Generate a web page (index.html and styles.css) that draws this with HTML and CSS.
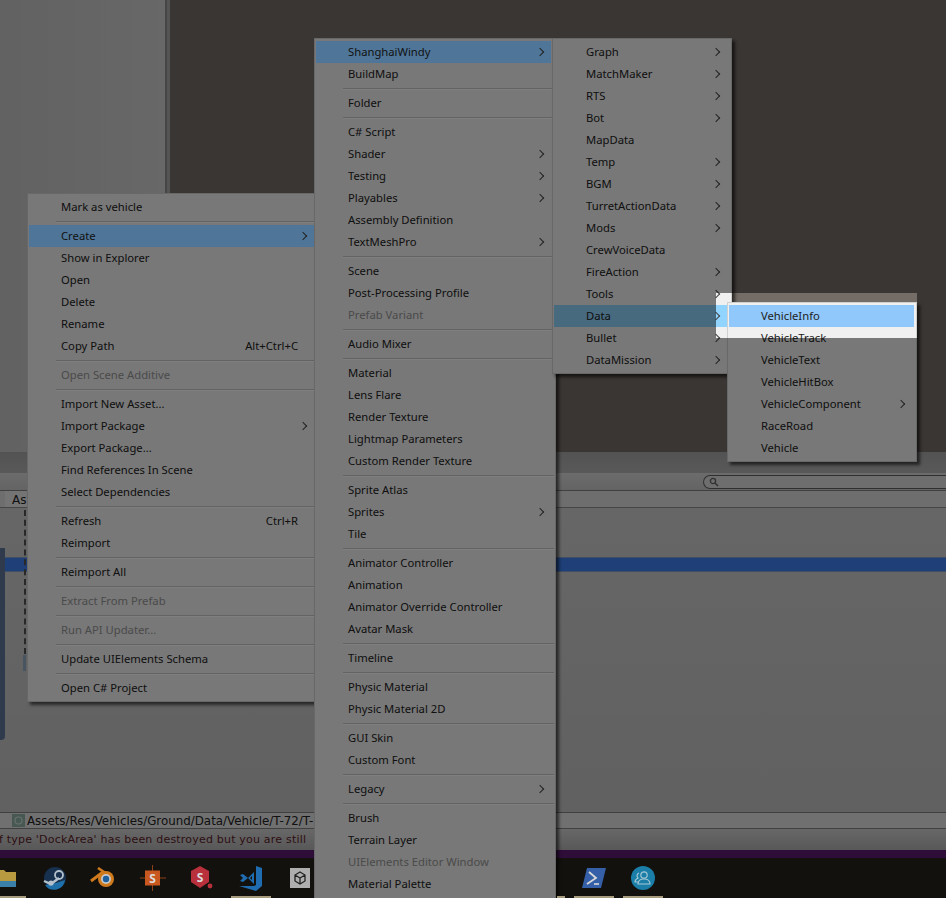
FILE: index.html
```html
<!DOCTYPE html>
<html>
<head>
	<meta charset="UTF-8">
	<title>Create menu</title>
	<link rel="stylesheet" href="styles.css">
</head>
<body>
<div class="screen">

	<div class="top">
		<div class="inspector"></div>
		<div class="split"></div>
		<div class="scene"></div>
	</div>
	<div class="band"></div>
	<div class="toolbar">
		<div class="search">
			<svg class="glass" width="10" height="10" viewBox="0 0 10 10"><circle cx="4" cy="4" r="2.6" fill="none" stroke="#666" stroke-width="1.4"/><path d="M6 6l3 3" stroke="#666" stroke-width="1.6"/></svg>
		</div>
	</div>
	<div class="tabs"><span class="tab">As</span></div>
	<div class="list">
		<div class="tree-strip"></div>
		<div class="dashes"></div>
		<div class="blob"></div>
		<div class="selected"></div>
	</div>
	<div class="pathbar">
		<svg class="asset-icon" width="13" height="13" viewBox="0 0 13 13"><rect width="13" height="13" fill="#8fb0a4"/><circle cx="6.5" cy="6.5" r="3.5" fill="none" stroke="#cfe0da" stroke-width="1.2"/></svg>
		<span>Assets/Res/Vehicles/Ground/Data/Vehicle/T-72/T-</span>
	</div>
	<div class="console"><span>f type 'DockArea' has been destroyed but you are still</span></div>
	<div class="purple"></div>

	<div class="taskbar">
		<div class="slot on">
			<svg width="20" height="18" viewBox="0 0 20 18"><path d="M0 1h8l2 2h10v15H0z" fill="#b89a40"/><path d="M0 12h20v6H0z" fill="#3a80a8"/></svg>
		</div>
		<div class="slot">
			<svg width="24" height="24" viewBox="0 0 24 24"><circle cx="12" cy="12" r="11" fill="#16304e"/><path d="M2 19a11 11 0 0 0 20-5l-9 3z" fill="#1f6fa8"/><path d="M1 15l7 3 8-6" stroke="#b4c0cc" stroke-width="2.4" fill="none"/><circle cx="16" cy="9" r="4" fill="none" stroke="#b4c0cc" stroke-width="1.8"/><circle cx="8" cy="17" r="2.6" fill="#b4c0cc"/></svg>
		</div>
		<div class="slot">
			<svg width="27" height="22" viewBox="0 0 27 22"><path d="M1 14L13 5" stroke="#d07a1e" stroke-width="3"/><path d="M8 1l9 6" stroke="#d07a1e" stroke-width="2.6"/><circle cx="16" cy="12" r="8" fill="#d07a1e"/><circle cx="16" cy="12" r="5" fill="#c8c8c8"/><circle cx="16" cy="12" r="3.2" fill="#1e5f9e"/></svg>
		</div>
		<div class="slot">
			<svg width="28" height="26" viewBox="0 0 28 26"><path d="M13.500 0v26M1 13h26" stroke="#8c4018" stroke-width="1"/><rect x="6" y="5.500" width="15" height="15" fill="#c8581f"/><text class="icon-s" x="13.500" y="17.500">S</text></svg>
		</div>
		<div class="slot">
			<svg width="24" height="26" viewBox="0 0 24 26"><path d="M10 1l9 5v11l-9 6-9-6V6z" fill="#b8303c"/><circle cx="20" cy="21" r="2.400" fill="#b8303c"/><text class="icon-s" x="10" y="17">S</text></svg>
		</div>
		<div class="slot on">
			<svg width="24" height="26" viewBox="0 0 24 26"><path d="M17 1l6 2v18l-6 5L0 21h15l2-1z" fill="#1f6cb0"/><path d="M1 10l3-1 5 4 6-6v12l-6-6-5 4-3-1 3-3zM11 13l2 2v-4z" fill="#1f6cb0" fill-rule="evenodd"/></svg>
		</div>
		<div class="slot">
			<div class="unity">
				<svg width="14" height="14" viewBox="0 0 14 14"><path d="M7 1l5 3v6l-5 3-5-3V4z M7 7l5-3 M7 7v6 M7 7L2 4" fill="none" stroke="#222" stroke-width="1.3"/></svg>
			</div>
		</div>
		<div class="slot"></div>
		<div class="slot"></div>
		<div class="slot"></div>
		<div class="slot"></div>
		<div class="slot on peek"></div>
		<div class="slot on">
			<svg width="24" height="20" viewBox="0 0 24 20"><path d="M5 0h19l-5 20H0z" fill="#3560a8"/><path d="M7 4l7 6-9 6" fill="none" stroke="#d8d8d8" stroke-width="1.8"/><path d="M12 16h5" stroke="#d8d8d8" stroke-width="1.6"/></svg>
		</div>
		<div class="slot on">
			<svg width="24" height="24" viewBox="0 0 24 24"><circle cx="12" cy="12" r="12" fill="#1a7ea8"/><circle cx="13" cy="9" r="3.2" fill="none" stroke="#a4c8d4" stroke-width="1.2"/><path d="M7 18c0-4 3-5 6-5s6 1 6 5zM8 7a3 3 0 0 0-1 5c-2 1-3 2-3 4h3" fill="none" stroke="#a4c8d4" stroke-width="1.2"/></svg>
		</div>
	</div>

	<!-- context menu -->
	<div class="menu menu-project">
		<div class="row">Mark as vehicle</div>
		<div class="sep"></div>
		<div class="row lit sub">Create</div>
		<div class="row">Show in Explorer</div>
		<div class="row">Open</div>
		<div class="row">Delete</div>
		<div class="row">Rename</div>
		<div class="row">Copy Path<span class="key">Alt+Ctrl+C</span></div>
		<div class="sep"></div>
		<div class="row off">Open Scene Additive</div>
		<div class="sep"></div>
		<div class="row">Import New Asset...</div>
		<div class="row sub">Import Package</div>
		<div class="row">Export Package...</div>
		<div class="row">Find References In Scene</div>
		<div class="row">Select Dependencies</div>
		<div class="sep"></div>
		<div class="row">Refresh<span class="key">Ctrl+R</span></div>
		<div class="row">Reimport</div>
		<div class="sep"></div>
		<div class="row">Reimport All</div>
		<div class="sep"></div>
		<div class="row off">Extract From Prefab</div>
		<div class="sep"></div>
		<div class="row off">Run API Updater...</div>
		<div class="sep"></div>
		<div class="row">Update UIElements Schema</div>
		<div class="sep"></div>
		<div class="row">Open C# Project</div>
	</div>

	<!-- create -->
	<div class="menu menu-create">
		<div class="row lit sub">ShanghaiWindy</div>
		<div class="row">BuildMap</div>
		<div class="sep"></div>
		<div class="row">Folder</div>
		<div class="sep"></div>
		<div class="row">C# Script</div>
		<div class="row sub">Shader</div>
		<div class="row sub">Testing</div>
		<div class="row sub">Playables</div>
		<div class="row">Assembly Definition</div>
		<div class="row sub">TextMeshPro</div>
		<div class="sep"></div>
		<div class="row">Scene</div>
		<div class="row">Post-Processing Profile</div>
		<div class="row off">Prefab Variant</div>
		<div class="sep"></div>
		<div class="row">Audio Mixer</div>
		<div class="sep"></div>
		<div class="row">Material</div>
		<div class="row">Lens Flare</div>
		<div class="row">Render Texture</div>
		<div class="row">Lightmap Parameters</div>
		<div class="row">Custom Render Texture</div>
		<div class="sep"></div>
		<div class="row">Sprite Atlas</div>
		<div class="row sub">Sprites</div>
		<div class="row">Tile</div>
		<div class="sep"></div>
		<div class="row">Animator Controller</div>
		<div class="row">Animation</div>
		<div class="row">Animator Override Controller</div>
		<div class="row">Avatar Mask</div>
		<div class="sep"></div>
		<div class="row">Timeline</div>
		<div class="sep"></div>
		<div class="row">Physic Material</div>
		<div class="row">Physic Material 2D</div>
		<div class="sep"></div>
		<div class="row">GUI Skin</div>
		<div class="row">Custom Font</div>
		<div class="sep"></div>
		<div class="row sub">Legacy</div>
		<div class="sep"></div>
		<div class="row">Brush</div>
		<div class="row">Terrain Layer</div>
		<div class="row off">UIElements Editor Window</div>
		<div class="row">Material Palette</div>
	</div>

	<!-- ShanghaiWindy -->
	<div class="menu menu-windy">
		<div class="row sub">Graph</div>
		<div class="row sub">MatchMaker</div>
		<div class="row sub">RTS</div>
		<div class="row sub">Bot</div>
		<div class="row">MapData</div>
		<div class="row sub">Temp</div>
		<div class="row sub">BGM</div>
		<div class="row sub">TurretActionData</div>
		<div class="row sub">Mods</div>
		<div class="row">CrewVoiceData</div>
		<div class="row sub">FireAction</div>
		<div class="row sub">Tools</div>
		<div class="row open sub">Data</div>
		<div class="row sub">Bullet</div>
		<div class="row sub">DataMission</div>
	</div>

	<!-- Data -->
	<div class="menu menu-data">
		<div class="row hot">VehicleInfo</div>
		<div class="row">VehicleTrack</div>
		<div class="row">VehicleText</div>
		<div class="row">VehicleHitBox</div>
		<div class="row sub">VehicleComponent</div>
		<div class="row">RaceRoad</div>
		<div class="row">Vehicle</div>
	</div>

	<!-- everything is dimmed except this box -->
	<div class="spotlight"></div>
</div>
</body>
</html>
```

FILE: styles.css
```css
html, body{margin: 0; padding: 0; background: #000;}
.screen{position: relative; width: 946px; height: 898px; overflow: hidden; display: flex; flex-direction: column;
		font-family: "Noto Sans", sans-serif;}

/* editor behind the menus, colours are before the dimming */
.top{display: flex; height: 452px;}
.inspector{width: 165px; background: linear-gradient(90deg, #c4c4c4, #d0d0d0);}
.split{width: 5px; background: linear-gradient(90deg, #8c8c8c 40%, #a8a8a8 40%);}
.scene{flex: 1; background: #746c66;}
.band{height: 21px; background: linear-gradient(#a6a6a6, #b2b2b2);}
.toolbar{height: 17px; border-bottom: 1px solid #808080; background: linear-gradient(#d8d8d8, #c8c8c8); display: flex; justify-content: flex-end; align-items: center;}
.search{width: 237px; height: 12px; border: 1px solid #606060; border-right: 0; border-radius: 8px 0 0 8px; background: #dcdcdc; display: flex; align-items: center; padding-left: 5px;}
.tabs{height: 16px; border-bottom: 1px solid #8c8c8c; background: #dcdcdc; padding-left: 5px;}
.tab{display: block; width: 22px; height: 16px; font-size: 12px; line-height: 19px; padding-left: 7px; color: #222; background: #e8e8e8; box-sizing: border-box; font-family: "DejaVu Sans", sans-serif; overflow: hidden;}
.list{position: relative; height: 304px; padding-top: 49px; box-sizing: border-box; background: linear-gradient(#cdcdcd, #c2c2c2);}
.selected{height: 13px; background: #3e7ef0; border-top: 1px solid #7fa0c8; border-bottom: 1px solid #7fa0c8;}
.tree-strip{position: absolute; left: 0; top: 40px; width: 5px; height: 192px; background: #5e7698; border-radius: 0 0 4px 0;}
.dashes{position: absolute; left: 24px; top: 2px; height: 144px; border-left: 2px dashed #505050;}
.blob{position: absolute; left: 23px; top: 147px; width: 3px; height: 16px; background: #90a8c0;}
.pathbar{height: 15px; border-top: 1px solid #808080; background: #e0e0e0; display: flex; align-items: center; gap: 2px; padding-left: 12px; white-space: nowrap; font-family: "DejaVu Sans", sans-serif; font-size: 11.85px; color: #222;}
.console{height: 21px; border-top: 1px solid #808080; background: linear-gradient(#d0d0d0, #b0b0b0); font-family: "DejaVu Sans", sans-serif; font-size: 11px; letter-spacing: .2px; line-height: 21px; color: #5c1c28; white-space: nowrap; margin-left: -1px;}
.purple{height: 8px; background: #5c1a72;}

.taskbar{height: 40px; background: #24221a; display: flex; margin-left: -19px;}
.slot{position: relative; flex: none; width: 49px; height: 40px; display: flex; align-items: center; justify-content: center;}
/* brighter than the dimming allows, so these sit above it */
.slot > svg{position: relative; z-index: 1;}
.slot.on::after{content: ""; position: absolute; z-index: 1; left: 5px; bottom: 0; width: 40px; height: 2px; background: #a89c7e;}
.slot.peek::after{left: 37px; width: 8px;}
.icon-s{font-family: "Noto Sans", sans-serif; font-size: 12px; font-weight: bold; fill: #dcdcdc; text-anchor: middle;}
.unity{position: relative; z-index: 1; width: 20px; height: 20px; background: #aeaeae; display: flex; align-items: center; justify-content: center;}

/* menus */
.menu{position: absolute; box-sizing: border-box; padding: 2px 1px; background: #f0f0f0; border: 1px solid #d0d0d0; box-shadow: 3px 3px 3px rgba(0,0,0,.6); font-size: 11.25px; color: #222;}
.menu-project{left: 27px; top: 193px; width: 292px;}
.menu-create{left: 314px; top: 38px; width: 242px; height: 880px;}
.menu-windy{left: 552px; top: 38px; width: 180px;}
.menu-data{left: 727px; top: 302px; width: 190px;}

.row{position: relative; height: 22px; line-height: 22px; padding-left: 32px; white-space: nowrap; display: flex; justify-content: space-between;}
.row.off{color: #959595;}
.row.open{background: #90d4ff;}
.row.hot{background: #90c8fb; margin-right: 1px;}
.row.sub::after{content: ""; position: absolute; right: 11px; top: 8px; width: 5px; height: 5px; border-top: 1px solid #444; border-right: 1px solid #444; transform: rotate(45deg);}
/* the open row of the two first menus, painted above the dimming */
.row.lit{z-index: 1; margin-right: 3px; background: #4f7698; color: #111;}
.row.lit.sub::after{right: 8px; border-color: #222;}
.key{margin-right: 19px;}
.sep{height: 7px; margin-left: 27px; position: relative;}
.sep::before{content: ""; position: absolute; top: 3px; left: 0; right: 0; height: 1px; background: #c6c6c6; border-bottom: 1px solid #fff;}

.spotlight{position: absolute; left: 716px; top: 293px; width: 201px; height: 45px; box-shadow: 0 0 0 1200px rgba(0,0,0,.5);}
```
